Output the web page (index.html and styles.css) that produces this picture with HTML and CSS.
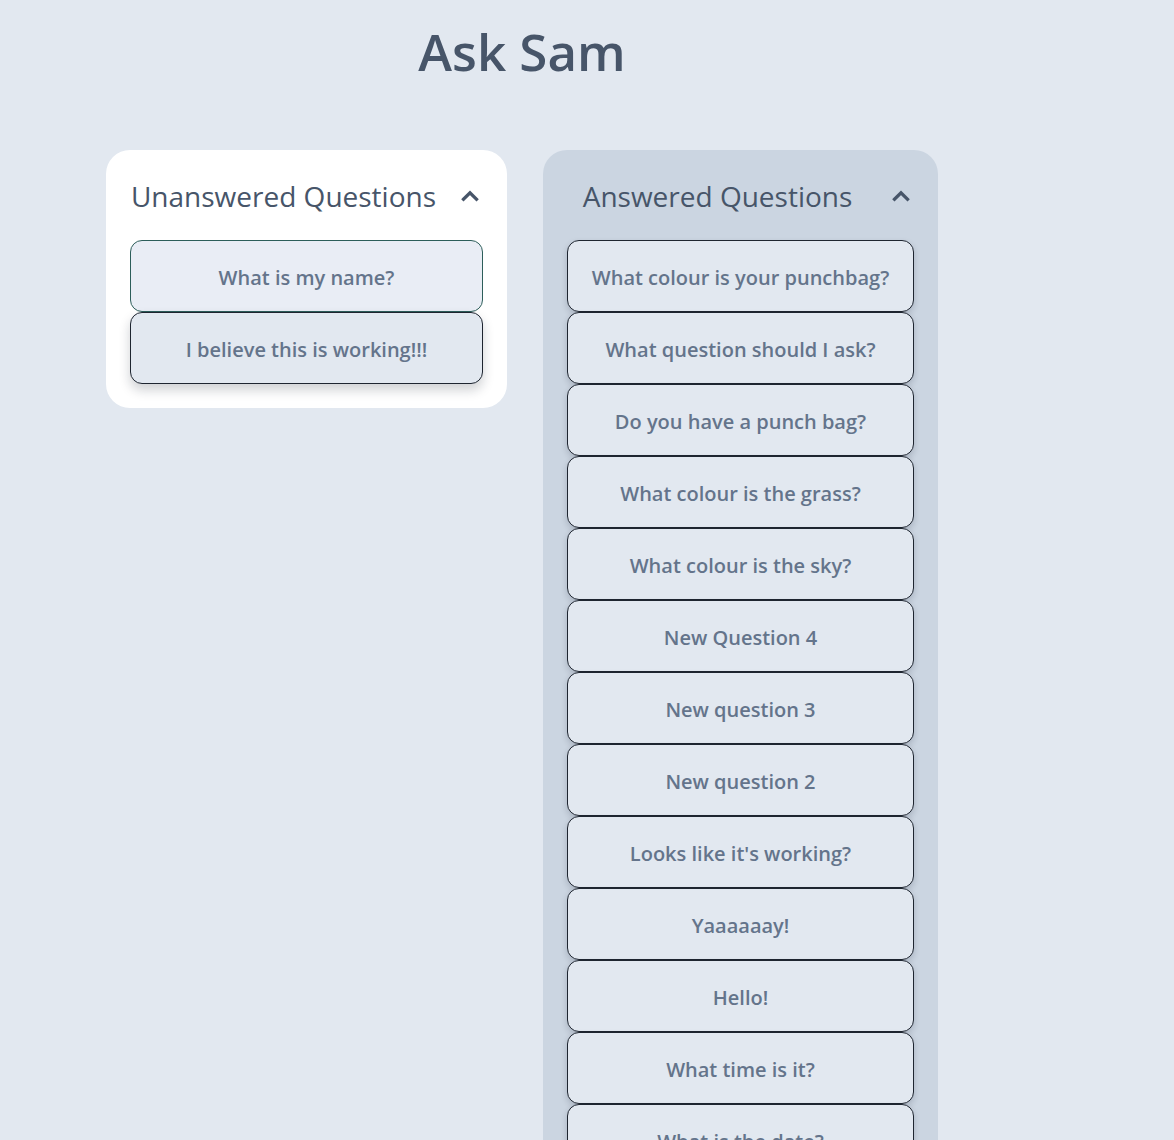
FILE: index.html
```html
<!DOCTYPE html>
<html lang="en">
<head>
<meta charset="utf-8">
<title>Ask Sam</title>
<link rel="stylesheet" href="styles.css">
</head>
<body>
<main class="page">
  <h1 class="title">Ask Sam</h1>
  <div class="columns">
    <section class="card card-light">
      <header class="card-head">
        <span class="card-title">Unanswered Questions</span>
        <svg class="chev" viewBox="0 0 24 24" width="26" height="26"><path d="M6 15l6-6 6 6" fill="none" stroke="#475569" stroke-width="3" stroke-linecap="square" stroke-linejoin="miter"/></svg>
      </header>
      <ul class="list">
        <li class="item item-active">What is my name?</li>
        <li class="item item-shadow">I believe this is working!!!</li>
      </ul>
    </section>
    <section class="card card-dark">
      <header class="card-head">
        <span class="card-title">Answered Questions</span>
        <svg class="chev" viewBox="0 0 24 24" width="26" height="26"><path d="M6 15l6-6 6 6" fill="none" stroke="#475569" stroke-width="3" stroke-linecap="square" stroke-linejoin="miter"/></svg>
      </header>
      <ul class="list">
        <li class="item">What colour is your punchbag?</li>
        <li class="item">What question should I ask?</li>
        <li class="item">Do you have a punch bag?</li>
        <li class="item">What colour is the grass?</li>
        <li class="item">What colour is the sky?</li>
        <li class="item">New Question 4</li>
        <li class="item">New question 3</li>
        <li class="item">New question 2</li>
        <li class="item">Looks like it's working?</li>
        <li class="item">Yaaaaaay!</li>
        <li class="item">Hello!</li>
        <li class="item">What time is it?</li>
        <li class="item">What is the date?</li>
      </ul>
    </section>
  </div>
</main>
</body>
</html>
```
FILE: styles.css
```css
* { box-sizing: border-box; }
html, body { margin: 0; padding: 0; }
body {
  background: #e2e8f0;
  font-family: "Open Sans", "Noto Sans", sans-serif;
  color: #475569;
  height: 1140px;
  overflow: hidden;
}
.page {
  width: 1044px;
  display: flex;
  flex-direction: column;
  align-items: center;
  padding-top: 18px;
}
.title {
  margin: 0;
  font-size: 51px;
  line-height: 66px;
  font-weight: 600;
  color: #475569;
}
.columns {
  display: flex;
  gap: 36px;
  align-items: flex-start;
  margin-top: 66px;
}
.card {
  border-radius: 24px;
  padding: 24px;
}
.card-light { background: #ffffff; width: 401px; }
.card-dark { background: #cbd5e1; width: 395px; }
.card-head {
  display: flex;
  align-items: center;
  height: 46px;
  margin-bottom: 20px;
  padding-bottom: 2px;
}
.card-title {
  flex: 1;
  text-align: center;
  padding-right: 20px;
  font-size: 28px;
  font-weight: 400;
  color: #475569;
  white-space: nowrap;
}
.chev { flex: none; display: block; }
.list { list-style: none; margin: 0; padding: 0; }
.item {
  height: 72px;
  display: flex;
  align-items: center;
  justify-content: center;
  padding-top: 3px;
  border: 1px solid #1e2530;
  border-radius: 12px;
  background: #e2e8f0;
  color: #64748b;
  font-size: 20px;
  font-weight: 600;
  box-shadow: 0 3px 6px rgba(15, 23, 42, 0.18);
}
.item-active {
  background: #e9edf5;
  border-color: #2d5e5a;
  box-shadow: none;
}
.item-shadow {
  box-shadow: 0 6px 12px rgba(15, 23, 42, 0.2);
}
```
